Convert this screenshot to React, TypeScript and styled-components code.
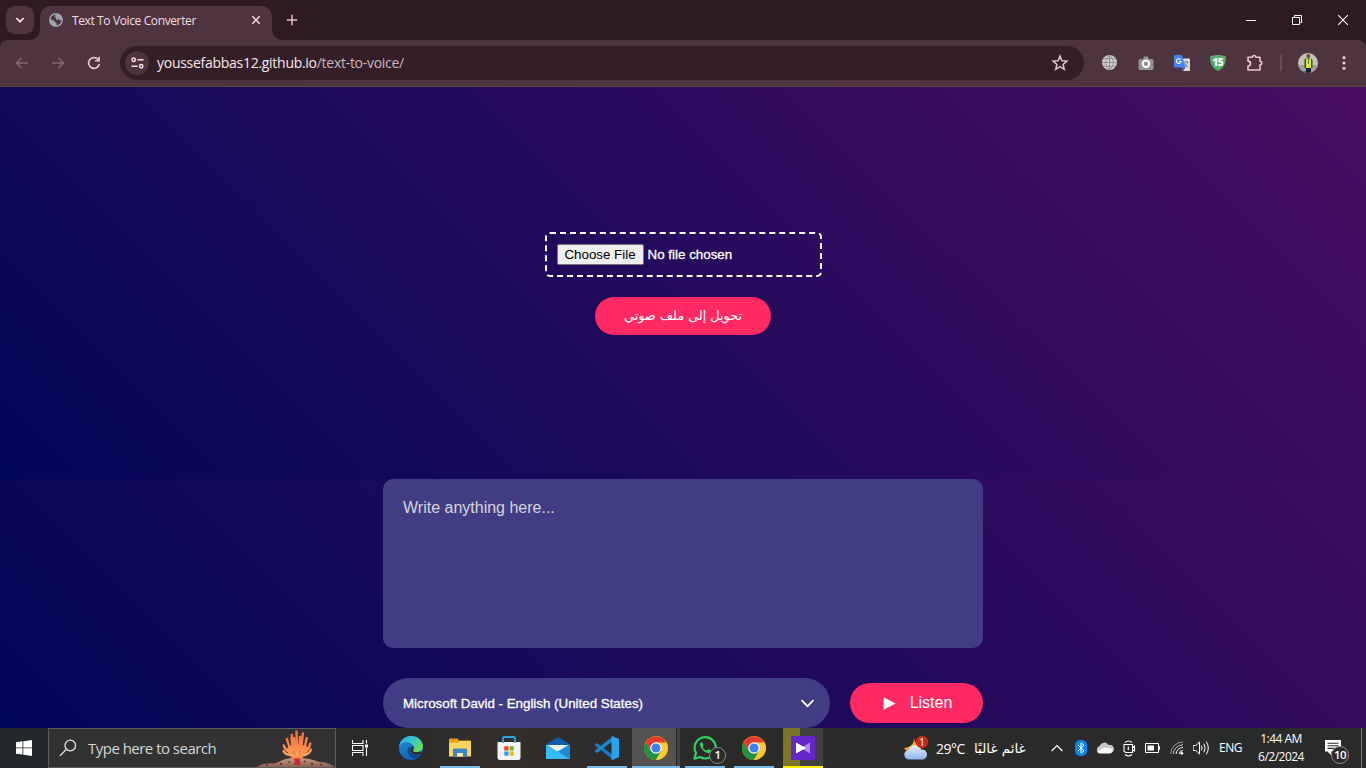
import React from 'react';
import styled, { createGlobalStyle, css } from 'styled-components';

const GlobalStyle = createGlobalStyle`
  * { box-sizing: border-box; }
  html, body { margin: 0; padding: 0; overflow: hidden; }
  svg { display: block; flex: none; }
`;

const uiFont = `'Open Sans', 'Noto Sans', 'DejaVu Sans', sans-serif`;
const pageFont = `'Liberation Sans', Arial, sans-serif`;

const Desktop = styled.div`
  width: 1366px;
  height: 768px;
  display: flex;
  flex-direction: column;
  overflow: hidden;
  background: #2e1a22;
  font-family: ${uiFont};
`;

/* ---------- Browser chrome ---------- */

const TabStrip = styled.div`
  height: 40px;
  display: flex;
  align-items: center;
  padding-left: 6px;
`;

const TabSearch = styled.div`
  width: 28px;
  height: 28px;
  border-radius: 9px;
  background: #4e343e;
  display: grid;
  place-items: center;
`;

const Tab = styled.div`
  position: relative;
  align-self: flex-end;
  width: 232px;
  height: 34px;
  margin-left: 6px;
  padding: 0 10px 6px 9px;
  display: flex;
  align-items: center;
  background: #4e343e;
  border-radius: 10px 10px 0 0;
  &::before, &::after {
    content: '';
    position: absolute;
    bottom: 0;
    width: 10px;
    height: 10px;
  }
  &::before { left: -10px; background: radial-gradient(circle at 0 0, transparent 9.5px, #4e343e 10px); }
  &::after { right: -10px; background: radial-gradient(circle at 100% 0, transparent 9.5px, #4e343e 10px); }
`;

const TabTitle = styled.span`
  flex: 1;
  margin-left: 9px;
  padding-top: 1px;
  font-size: 12px;
  letter-spacing: -0.38px;
  line-height: 17px;
  color: #f3dfe5;
  white-space: nowrap;
`;

const NewTab = styled.div`
  margin-left: 14px;
`;

const WindowControls = styled.div`
  margin-left: auto;
  display: flex;
`;

const WindowButton = styled.div`
  width: 46px;
  height: 40px;
  display: grid;
  place-items: center;
`;

const Toolbar = styled.div`
  height: 47px;
  display: flex;
  align-items: center;
  padding: 0 4px 1px;
  background: #4e343e;
  border-bottom: 1px solid #57444a;
  border-radius: 8px 8px 0 0;
`;

const ToolButton = styled.div`
  width: 36px;
  height: 36px;
  display: grid;
  place-items: center;
`;

const AddressBar = styled.div`
  width: 964px;
  height: 34px;
  margin: 0 8px;
  padding: 0 14px 0 5px;
  display: flex;
  align-items: center;
  border-radius: 17px;
  background: #341e28;
`;

const SiteInfo = styled.div`
  width: 24px;
  height: 24px;
  border-radius: 50%;
  background: #4e343e;
  display: grid;
  place-items: center;
`;

const Url = styled.span`
  flex: 1;
  margin-left: 8px;
  font-size: 14px;
  letter-spacing: -0.28px;
  line-height: 20px;
  color: #f8e9ee;
  span { color: #cbb6bd; }
`;

const ToolDivider = styled.div`
  width: 2px;
  height: 16px;
  margin: 0 8px;
  background: #6b4d58;
`;

/* ---------- Web page ---------- */

const Page = styled.main`
  height: 641px;
  display: flex;
  flex-direction: column;
  align-items: center;
  background: linear-gradient(45deg, #010758, #490d61);
  font-family: ${pageFont};
`;

const UploadSection = styled.section`
  width: 100%;
  height: 392px;
  padding-top: 145px;
  display: flex;
  flex-direction: column;
  align-items: center;
  background: linear-gradient(45deg, #010758, #490d61);
`;

const FileBox = styled.div`
  width: 277px;
  height: 45px;
  padding: 10px;
  display: flex;
  align-items: center;
  gap: 4px;
  border: 2px dashed #fff;
  border-radius: 5px;
`;

const FileButton = styled.button`
  width: 87px;
  height: 21px;
  padding: 0;
  border: 1px solid #767676;
  border-radius: 2px;
  background: #efefef;
  color: #000;
  font: 13.333px/17px ${pageFont};
`;

const FileStatus = styled.span`
  font-size: 13.333px;
  letter-spacing: 0.02px;
  color: #fff;
  -webkit-text-stroke: 0.3px #fff;
`;

const PinkButton = styled.button<{ $width: number; $height: number }>`
  width: ${p => p.$width}px;
  height: ${p => p.$height}px;
  padding: 0;
  display: flex;
  align-items: center;
  justify-content: center;
  border: 0;
  border-radius: 30px;
  background: #ff2963;
  color: #fff;
  font: 16px ${pageFont};
`;

const ConvertButton = styled(PinkButton)`
  margin-top: 20px;
  padding-bottom: 2px;
  font: 12.8px 'DejaVu Sans', sans-serif;
`;

const ListenButton = styled(PinkButton)`
  padding-left: 2px;
  gap: 14px;
`;

const TextBox = styled.div`
  width: 600px;
  height: 169px;
  padding: 20px;
  border-radius: 10px;
  background: #403d84;
  color: #d9d5dc;
  font-size: 16px;
  line-height: 18px;
`;

const Controls = styled.div`
  width: 600px;
  margin-top: 30px;
  display: flex;
  align-items: center;
  gap: 20px;
`;

const VoiceSelect = styled.div`
  flex: 1;
  height: 50px;
  padding: 0 15px 0 20px;
  display: flex;
  align-items: center;
  justify-content: space-between;
  border-radius: 25px;
  background: #403d84;
  color: #fff;
  font-size: 13.333px;
  -webkit-text-stroke: 0.3px #fff;
`;

/* ---------- Taskbar ---------- */

const Taskbar = styled.div`
  height: 40px;
  display: flex;
  background: linear-gradient(90deg, #22272b 0, #2a2a2a 28%, #312e2c 36%, #2b2a29 55%, #292b2b 100%);
  color: #fff;
`;

const StartButton = styled.div`
  width: 48px;
  display: grid;
  place-items: center;
`;

const SearchBox = styled.div`
  width: 288px;
  display: flex;
  align-items: center;
  padding-left: 10px;
  border: 1px solid #5d5d5d;
  background: #323232;
`;

const SearchText = styled.span`
  flex: 1;
  margin-left: 11px;
  font-size: 15px;
  letter-spacing: -0.52px;
  color: #d6d6d6;
  white-space: nowrap;
`;

const Apps = styled.div`
  display: flex;
  margin-left: 1px;
`;

const AppSlot = styled.div<{ $line?: string; $active?: boolean; $flag?: boolean }>`
  position: relative;
  width: 40px;
  height: 40px;
  margin: 0 4px 0 5px;
  padding-bottom: 1px;
  display: grid;
  place-items: center;
  ${p => p.$line && css`box-shadow: inset 0 -2px 0 ${p.$line};`}
  ${p => p.$active && css`
    width: 48px;
    margin: 0 0 0 1px;
    background: linear-gradient(90deg, #555352 44px, #242424 44px, #242424 45px, #454443 45px);
  `}
  ${p => p.$flag && css`
    background: linear-gradient(90deg, #7b7527 17px, #3f403f 17px);
  `}
`;

const TaskView = styled.div`
  width: 49px;
  display: grid;
  place-items: center;
`;

const CountBadge = styled.span<{ $left: number; $top: number; $size: number }>`
  position: absolute;
  left: ${p => p.$left}px;
  top: ${p => p.$top}px;
  width: ${p => p.$size}px;
  height: ${p => p.$size}px;
  border: 1px solid #8b8b8b;
  border-radius: 50%;
  background: #2b2b2b;
  font-size: 11.5px;
  font-weight: 600;
  letter-spacing: -0.5px;
  line-height: ${p => p.$size - 3}px;
  text-align: center;
`;

const Tray = styled.div`
  margin-left: auto;
  display: flex;
  font-size: 12px;
`;

const Weather = styled.div`
  width: 149px;
  padding-left: 7px;
  display: flex;
  align-items: center;
`;

const Temperature = styled.span`
  width: 38px;
  margin-left: 7px;
  font-size: 14px;
  letter-spacing: -0.5px;
`;

const Condition = styled.span`
  font: 13.5px 'DejaVu Sans', sans-serif;
  white-space: nowrap;
`;

const TrayIcon = styled.div`
  width: 24px;
  display: grid;
  place-items: center;
`;

const Language = styled.div`
  width: 36px;
  padding-right: 1px;
  line-height: 39px;
  text-align: center;
  letter-spacing: -0.45px;
`;

const Clock = styled.div`
  width: 64px;
  padding-top: 2px;
  text-align: center;
  line-height: 18px;
  letter-spacing: -0.5px;
`;

const Notifications = styled.div`
  position: relative;
  width: 48px;
  padding: 12px 0 0 12px;
`;

const ShowDesktop = styled.div`
  width: 5px;
  border-left: 1px solid #777;
`;

/* ---------- Drawings ---------- */

const ChromeLogo = () => (
  <svg width="24" height="24" viewBox="0 0 24 24">
    <circle cx="12" cy="12" r="12" fill="#fbc116" />
    <path d="M1.600 6A12 12 0 0 0 12 24L17.200 15 12 12 6.800 15Z" fill="#229342" />
    <path d="M12 24A12 12 0 0 0 22.400 6.500H12L17 15Z" fill="#fcc934" />
    <path d="M1.600 6 6.800 15 12 6.500H22.400A12 12 0 0 0 1.600 6Z" fill="#e33b2e" />
    <circle cx="12" cy="12" r="5.800" fill="#fff" />
    <circle cx="12" cy="12" r="4.600" fill="#3b82f0" />
  </svg>
);

const EdgeLogo = () => (
  <svg width="24" height="24" viewBox="0 0 24 24">
    <defs>
      <linearGradient id="edgeTop" x1="0" y1="0" x2="1" y2="0.5">
        <stop offset="0" stopColor="#2aa7e0" /><stop offset="0.55" stopColor="#38c6cf" /><stop offset="1" stopColor="#62dc5a" />
      </linearGradient>
      <linearGradient id="edgeBody" x1="0" y1="0" x2="0.6" y2="1">
        <stop offset="0" stopColor="#1d8fd8" /><stop offset="1" stopColor="#0f62b8" />
      </linearGradient>
    </defs>
    <circle cx="12" cy="12" r="12" fill="url(#edgeBody)" />
    <path d="M0 11C1 4 6 0 12 0c7 0 12 5 12 10.200c0 4-3 6-6.500 6c-3 0-4.200-1-3.500-2c1-1.200 1.200-2 .9-3.200C14 8 10.500 6.300 7.500 6.300 4 6.300 1 8.300 0 11Z" fill="url(#edgeTop)" />
    <path d="M9 12.200c-1.800 5 2 10 7 10 2.400 0 5.100-1.600 6.500-3.700-3.500 1.800-9 1.400-11.500-2.300-1-1.600-.8-3.500.3-5.200-1 0-1.800.5-2.300 1.200Z" fill="#0a4687" />
    <path d="M22.600 18.200c1 .4-1 2.500-2 3.200l4 3V16Z" fill="#2e2c2b" />
    <path d="M14.600 10.800c.6 1.700-.2 2.500-.8 3.500-.6 1.100 1 1.900 3.700 1.900 1.300 0 2.600-.3 3.700-1L23 17c-3.200 2.500-8.500 2.200-10.800-.2-1.700-1.900-.9-5 .9-6.600Z" fill="#2e2c2b" />
  </svg>
);

const FolderIcon = () => (
  <svg width="22" height="20" viewBox="0 0 22 20">
    <path d="M0 1.500A1 1 0 0 1 1 .5h7.500L10 2.500h11a1 1 0 0 1 1 1V8H0Z" fill="#e5a00d" />
    <path d="M0 4.500h9l1.500-1.500H22v15.500H0Z" fill="#fcd462" />
    <path d="M4 11.500a1 1 0 0 1 1-1h12a1 1 0 0 1 1 1v7h-4v-3.500H8v3.500H4Z" fill="#3a87c8" />
    <path d="M8 15h6v3.500H8Z" fill="#fbe9b0" />
  </svg>
);

const StoreIcon = () => (
  <svg width="24" height="24" viewBox="0 0 24 24">
    <path d="M6 7V2a1 1 0 0 1 1-1h10a1 1 0 0 1 1 1v5" fill="none" stroke="#2fa3df" strokeWidth="1.800" />
    <path d="M.5 6h23v15.500a2.500 2.500 0 0 1-2.500 2.500H3a2.500 2.500 0 0 1-2.500-2.500Z" fill="#f5f5f5" />
    <path d="M6 6V4.500M18 6V4.500M6 6v1M18 6v1" stroke="#2fa3df" strokeWidth="1.800" />
    <path d="M7.300 10.300h4.200v4.200H7.300Z" fill="#e8402a" /><path d="M12.500 10.300h4.200v4.200h-4.200Z" fill="#75b51b" />
    <path d="M7.300 15.500h4.200v4.200H7.300Z" fill="#2aa0e6" /><path d="M12.500 15.500h4.200v4.200h-4.200Z" fill="#fcb514" />
  </svg>
);

const MailIcon = () => (
  <svg width="24" height="24" viewBox="0 0 24 24">
    <path d="M0 8.500 12 1l12 7.500V13H0Z" fill="#0f5fae" />
    <path d="M1.500 9h21L12 17Z" fill="#f1f3f6" />
    <path d="M12 15 24 8.500V23H0Z" fill="#2ba6ea" />
    <path d="M0 8.500 24 23H0Z" fill="#37bcf5" />
    <path d="M24 8.500 12.500 15.800 24 23Z" fill="#1e8ad6" />
  </svg>
);

const CodeIcon = () => (
  <svg width="24" height="24" viewBox="0 0 24 24">
    <path d="M0 8.500 2 7l16 12v4.800L0 9.500Z" fill="#1678bd" />
    <path d="M0 15.500 2 17 18 5V.2L0 14.500Z" fill="#1a86cc" />
    <path d="M17.500.2 24 3v18l-6.500 3c-.6 0-1-.3-1-.8V.8c0-.4.4-.6 1-.6Z" fill="#2ba2ee" />
  </svg>
);

const WhatsAppIcon = () => (
  <svg width="24" height="24" viewBox="0 0 24 24" fill="none">
    <path d="M1.300 22.700 3 17A10.600 10.600 0 1 1 7 21Z" stroke="#2fd366" strokeWidth="2.100" strokeLinejoin="round" />
    <path d="M8.200 6.200c-1.800 1.300-1.600 3.300.3 6 2.300 3.300 4.700 4.800 6.900 4.900 1.500 0 2.600-.8 2.800-2.500l-3-1.500-1.400 1.600c-2-.8-3.400-2.100-4.300-3.800l1-1.500-1.300-3.200Z" fill="#2fd366" />
  </svg>
);

const PurpleStudioIcon = () => (
  <svg width="24" height="24" viewBox="0 0 24 24">
    <rect width="24" height="24" rx="1.500" fill="#6425cb" />
    <path d="M19 6.500v11L10 12Z" fill="#b08aea" />
    <path d="M5 6.500v11l10-5.500Z" fill="#fff" />
  </svg>
);

const CoralArt = () => (
  <svg width="80" height="38" viewBox="0 0 80 38">
    <defs>
      <linearGradient id="coral" gradientUnits="userSpaceOnUse" x1="0" y1="2" x2="0" y2="32">
        <stop offset="0" stopColor="#f4703c" /><stop offset="0.5" stopColor="#fd8848" /><stop offset="0.8" stopColor="#ffa45c" /><stop offset="1" stopColor="#f4683c" />
      </linearGradient>
      <linearGradient id="sand" x1="0" y1="0" x2="0" y2="1">
        <stop offset="0" stopColor="#c79b82" /><stop offset="1" stopColor="#8b5f50" />
      </linearGradient>
    </defs>
    <path d="M2 38c4-3 9-4 15-3.500 5 .3 8-3 14-4.500 7-1.800 16-1.300 23 0 7 1.500 8 3 13 3.200 5 .3 9 2 13 4.800Z" fill="url(#sand)" />
    <path d="M32 19 38 15h8l7 3c-1 6-4 10-8 13h-6c-4-3-6-7-7-12Z" fill="url(#coral)" />
    <g fill="none" stroke="#d94a30" strokeWidth=".7" opacity=".8">
      <path d="M38 16c.5 4 1 7 2.500 10M46 15c0 4-.5 8-2 11M34.500 19c1 3 2.500 5 4.500 7M50.500 19c-1 3-3 6-5 7.500" />
    </g>
    <g fill="none" stroke="url(#coral)" strokeLinecap="round" strokeLinejoin="round" strokeWidth="2.400">
      <path d="M42 20 41.500 2.500M39 20C37 16 36.500 10 36.800 6M36 21C33.500 17 33 13 31.800 10M34 23C30.500 21 29.500 19 28.800 16.500M45.500 20C47.500 14 47 8 48 4.500M48.500 21C51 17 50.500 12 51.800 9M50 23C53 21 54.500 18 55.200 14.500M34.500 26C31 25.500 29.500 24 28.500 22M49.500 26C53 25 55 23 56 20.500M44.600 16 45 8M39.500 14 39 9" />
    </g>
    <path d="M39 29.500c1 3 .5 5-.5 6.500h7.500c-1.500-2-1.500-4-.8-6.500Z" fill="#c62a34" />
    <g fill="#563a35">
      <circle cx="12" cy="36" r="1" /><circle cx="26" cy="35" r="1.200" /><circle cx="34" cy="33" r=".9" /><circle cx="50" cy="32.500" r="1" /><circle cx="57" cy="35" r="1.200" /><circle cx="66" cy="35.500" r="1" />
    </g>
  </svg>
);

const WeatherIcon = () => (
  <svg width="26" height="26" viewBox="0 0 26 26">
    <defs>
      <linearGradient id="cloud" x1="0" y1="0" x2="0" y2="1">
        <stop offset="0" stopColor="#e6effd" /><stop offset="1" stopColor="#8db2ec" />
      </linearGradient>
    </defs>
    <path d="M10.500 1c1.800 6-1.500 11.500-9.500 12 3 5.500 14 6 18-1C14 12 11.500 7 10.500 1Z" fill="#f6a62c" />
    <path d="M6.500 24.500a4.800 4.800 0 0 1-.8-9.600A6.500 6.500 0 0 1 18 14.600a5 5 0 0 1 2 9.900Z" fill="url(#cloud)" />
    <circle cx="19" cy="7" r="6.200" fill="#c42b1c" />
    <text x="19" y="10.800" fontSize="10.500" fill="#fff" textAnchor="middle" fontFamily="Open Sans, sans-serif">1</text>
  </svg>
);

const AvatarIcon = () => (
  <svg width="20" height="20" viewBox="0 0 20 20">
    <defs><clipPath id="round"><circle cx="10" cy="10" r="10" /></clipPath></defs>
    <g clipPath="url(#round)">
      <rect width="20" height="20" fill="#c9c0b4" />
      <path d="M0 12h20v8H0Z" fill="#a99f96" />
      <path d="M4 18h5v2H4Z" fill="#2673c4" />
      <circle cx="10.300" cy="3" r="2" fill="#694f43" />
      <path d="M6.500 6.500 8.500 5h4L14.500 7v8h-8Z" fill="#1f4b78" />
      <path d="M8 5.500h5V15H8Z" fill="#d5ea2b" />
      <path d="M10 5h.8v6H10Z" fill="#51603c" />
      <path d="M8 15h5v5H8Z" fill="#17202f" />
    </g>
  </svg>
);

const stroke = { fill: 'none', strokeLinecap: 'round', strokeLinejoin: 'round' } as const;

export default function App() {
  return (
    <Desktop>
      <GlobalStyle />

      <TabStrip>
        <TabSearch>
          <svg width="10" height="6" viewBox="0 0 10 6"><path d="m1.300 1 3.700 3.700L8.700 1" fill="none" stroke="#f6dfe6" strokeWidth="1.700" /></svg>
        </TabSearch>
        <Tab>
          <svg width="14" height="14" viewBox="0 0 14 14">
            <circle cx="7" cy="7" r="7" fill="#9ba5aa" />
            <path d="M7.600 1.400C6 2 5 3.500 6.500 4.200c1 .4-.4 1.800.8 2.300 1.500.5 2.500-.5 3.200.3.500.8 1.200.6 1.900.2 0 2.900-2.200 5.200-5 5.400.6-1.200.5-2.500-.6-3C5.700 8.900 5.500 7.300 4 7.200c-1 0-1.800-.5-2.400-1.100C2 3.200 4.600 1.200 7.600 1.400Z" fill="#4e343e" />
            <path d="M8.200 2.200c1.300.2 2.300.8 3 1.700-.8.700-2 .4-2.600-.2-.4-.5-.7-1-.4-1.500Z" fill="#9ba5aa" />
          </svg>
          <TabTitle>Text To Voice Converter</TabTitle>
          <svg width="12" height="12" viewBox="0 0 12 12"><path d="m2.300 2.300 7.400 7.400m0-7.400L2.300 9.700" stroke="#f6dfe6" strokeWidth="1.500" /></svg>
        </Tab>
        <NewTab>
          <svg width="12" height="12" viewBox="0 0 12 12"><path d="M6 .8v10.400M.8 6h10.400" stroke="#e6b9c9" strokeWidth="1.500" /></svg>
        </NewTab>
        <WindowControls>
          <WindowButton><svg width="10" height="10" viewBox="0 0 10 10"><path d="M0 5.500h10" stroke="#fff" /></svg></WindowButton>
          <WindowButton><svg width="10" height="10" viewBox="0 0 10 10"><path d="M.5 2.500h7v7h-7ZM2.500 2.500v-2h7v7h-2" fill="none" stroke="#fff" /></svg></WindowButton>
          <WindowButton><svg width="10" height="10" viewBox="0 0 10 10"><path d="m0 0 10 10M10 0 0 10" stroke="#fff" strokeWidth="1.100" /></svg></WindowButton>
        </WindowControls>
      </TabStrip>

      <Toolbar>
        <ToolButton><svg width="14" height="12" viewBox="0 0 14 12"><path d="M13 6H2M6.500 1 1.500 6l5 5" fill="none" stroke="#866873" strokeWidth="1.600" /></svg></ToolButton>
        <ToolButton><svg width="14" height="12" viewBox="0 0 14 12"><path d="M1 6h11M7.500 1l5 5-5 5" fill="none" stroke="#866873" strokeWidth="1.600" /></svg></ToolButton>
        <ToolButton><svg width="14" height="14" viewBox="0 0 14 14"><path d="M12.300 8A5.400 5.400 0 1 1 11 3.300L12.300 4.700" fill="none" stroke="#eec3d0" strokeWidth="1.700" /><path d="M12.900.8v4.800H8.100V4h3.200V.8Z" fill="#eec3d0" /></svg></ToolButton>
        <AddressBar>
          <SiteInfo>
            <svg width="13" height="12" viewBox="0 0 13 12" fill="none" stroke="#f6dfe6" strokeWidth="1.500">
              <circle cx="2.700" cy="2.700" r="1.700" /><path d="M6.500 2.700h6M.5 9.200h6" /><circle cx="10.200" cy="9.200" r="1.700" />
            </svg>
          </SiteInfo>
          <Url>youssefabbas12.github.io<span>/text-to-voice/</span></Url>
          <svg width="20" height="20" viewBox="0 0 20 20"><path d="m10 3 1.900 4.700 5 .4-3.800 3.300 1.200 4.900L10 13.700l-4.300 2.600 1.200-4.900-3.800-3.300 5-.4Z" fill="none" stroke="#ddc3cb" strokeWidth="1.500" /></svg>
        </AddressBar>
        <ToolButton>
          <svg width="16" height="16" viewBox="0 0 16 16"><circle cx="7.500" cy="7.500" r="7.500" fill="#d0cfcf" /><path d="M7.500 0v15M0 7.500h15M1.200 3.700h12.600M1.200 11.300h12.600M7.500.3c-5 4-5 10.400 0 14.400 5-4 5-10.400 0-14.400Z" fill="none" stroke="#858082" strokeWidth=".8" /></svg>
        </ToolButton>
        <ToolButton>
          <svg width="16" height="14" viewBox="0 0 16 14"><path d="M2 3h3l1-2.500h4L11 3h3a1.500 1.500 0 0 1 1.500 1.500v8A1.500 1.500 0 0 1 14 14H2a1.500 1.500 0 0 1-1.500-1.500v-8A1.500 1.500 0 0 1 2 3Z" fill="#929292" /><circle cx="8" cy="7.800" r="3.300" fill="none" stroke="#fff" strokeWidth="2" /></svg>
        </ToolButton>
        <ToolButton>
          <svg width="16" height="16" viewBox="0 0 16 16">
            <path d="M6 3.500h9a1 1 0 0 1 1 1V15a1 1 0 0 1-1 1H9Z" fill="#dcdfe1" />
            <path d="M9.500 7h5M12 5.800V7m1.800 0c-.5 2.500-2 4-3.300 5m0-4c.7 2 2 3.500 3.800 4.300" fill="none" stroke="#607d86" strokeWidth=".9" />
            <path d="M1 0h7l3.500 12.500H1a1 1 0 0 1-1-1V1a1 1 0 0 1 1-1Z" fill="#4284f3" /><path d="M8 12.500h3.500L9 16Z" fill="#2456b5" />
            <path d="M6.600 4.700A2.300 2.300 0 1 0 7 6.500H4.900" fill="none" stroke="#fff" strokeWidth="1.100" />
          </svg>
        </ToolButton>
        <ToolButton>
          <svg width="16" height="16" viewBox="0 0 16 16"><path d="M8 0c2.500 0 5.500.5 8 1.500C16 9 13.500 13.500 8 16 2.500 13.500 0 9 0 1.500 2.500.5 5.500 0 8 0Z" fill="#5aaa68" /><text x="7.800" y="10.500" fontSize="10" fontWeight="800" fill="#fff" textAnchor="middle" letterSpacing="-0.5" fontFamily="Open Sans, sans-serif">15</text></svg>
        </ToolButton>
        <ToolButton>
          <svg width="18" height="18" viewBox="0 0 18 18"><path d="M3 3.200H7.500a1.700 1.700 0 0 1 3.400 0H15v4.100a1.700 1.700 0 0 1 0 3.400V16H3v-3.900a2.500 2.500 0 0 0 0-5Z" {...stroke} stroke="#eec3d0" strokeWidth="1.600" /></svg>
        </ToolButton>
        <ToolDivider />
        <ToolButton><AvatarIcon /></ToolButton>
        <ToolButton><svg width="4" height="14" viewBox="0 0 4 14" fill="#eec3d0"><circle cx="2" cy="1.700" r="1.600" /><circle cx="2" cy="7" r="1.600" /><circle cx="2" cy="12.300" r="1.600" /></svg></ToolButton>
      </Toolbar>

      <Page>
        <UploadSection>
          <FileBox>
            <FileButton>Choose File</FileButton>
            <FileStatus>No file chosen</FileStatus>
          </FileBox>
          <ConvertButton $width={176} $height={38} dir="rtl">تحويل إلى ملف صوتي</ConvertButton>
        </UploadSection>
        <TextBox>Write anything here...</TextBox>
        <Controls>
          <VoiceSelect>
            Microsoft David - English (United States)
            <svg width="15" height="9" viewBox="0 0 15 9"><path d="m1.500 1.200 6 6 6-6" fill="none" stroke="#fff" strokeWidth="1.700" /></svg>
          </VoiceSelect>
          <ListenButton $width={133} $height={40}>
            <svg width="13" height="13" viewBox="0 0 13 13"><path d="M.6.300 12.600 6.500.6 12.700Z" fill="#fff" /></svg>
            Listen
          </ListenButton>
        </Controls>
      </Page>

      <Taskbar>
        <StartButton>
          <svg width="16" height="16" viewBox="0 0 16 16" fill="#fff"><path d="M0 2.200 6.500 1.300v6.200H0ZM7.300 1.200 16 0v7.500H7.300ZM0 8.300h6.500v6.300L0 13.700ZM7.300 8.300H16V16l-8.700-1.300Z" /></svg>
        </StartButton>
        <SearchBox>
          <svg width="18" height="18" viewBox="0 0 18 18"><circle cx="11.300" cy="6.500" r="5.300" fill="none" stroke="#e4e4e4" strokeWidth="1.300" /><path d="m7.500 10.300-6.500 6.500" stroke="#e4e4e4" strokeWidth="1.300" /></svg>
          <SearchText>Type here to search</SearchText>
          <CoralArt />
        </SearchBox>
        <TaskView>
          <svg width="17" height="16" viewBox="0 0 17 16"><path d="M.5 0v3.500h10.500V0M.5 16v-3.500h10.500V16M.5 5.500h10.500v5H.5ZM14.500 0v3.500M14.500 8v8" fill="none" stroke="#fff" strokeWidth="1.100" /><path d="M13 4.500h3v3h-3Z" fill="#fff" /></svg>
        </TaskView>
        <Apps>
          <AppSlot><EdgeLogo /></AppSlot>
          <AppSlot $line="#76b9ed"><FolderIcon /></AppSlot>
          <AppSlot><StoreIcon /></AppSlot>
          <AppSlot><MailIcon /></AppSlot>
          <AppSlot $line="#76b9ed"><CodeIcon /></AppSlot>
          <AppSlot $line="#76b9ed" $active><ChromeLogo /></AppSlot>
          <AppSlot $line="#76b9ed"><WhatsAppIcon /><CountBadge $left={24} $top={19} $size={17}>1</CountBadge></AppSlot>
          <AppSlot $line="#76b9ed"><ChromeLogo /></AppSlot>
          <AppSlot $line="#fff100" $flag><PurpleStudioIcon /></AppSlot>
        </Apps>
        <Tray>
          <Weather>
            <WeatherIcon />
            <Temperature>29°C</Temperature>
            <Condition dir="rtl">غائم غالبًا</Condition>
          </Weather>
          <TrayIcon><svg width="12" height="8" viewBox="0 0 12 8"><path d="m.6 7 5.400-5.500L11.400 7" fill="none" stroke="#fff" strokeWidth="1.200" /></svg></TrayIcon>
          <TrayIcon><svg width="12" height="16" viewBox="0 0 12 16"><rect width="12" height="16" rx="5" fill="#0a84f0" /><path d="m3 5 6 5.700-3 2.500V2.800l3 2.500L3 11" fill="none" stroke="#fff" strokeWidth="1" /></svg></TrayIcon>
          <TrayIcon><svg width="18" height="12" viewBox="0 0 18 12"><path d="M4 11A3.600 3.600 0 0 1 3.500 4 5 5 0 0 1 12.500 3 4 4 0 0 1 15 11Z" fill="#c6c6c6" /><path d="M1 9.500 8 5.500l8 1a3.200 3.200 0 0 1-2 5H4a3.500 3.500 0 0 1-3-2Z" fill="#f6f6f6" /></svg></TrayIcon>
          <TrayIcon><svg width="13" height="17" viewBox="0 0 13 17"><path d="M2 2.500Q5.500-.5 9 2.500M2 14.500Q5.500 17.500 9 14.500M1 4.500h8.500v8H2.500L1 11ZM9.500 7.500l2-1.500v5l-2-1.500" fill="none" stroke="#fff" strokeWidth="1.100" /><path d="M5.300 6.500v3.500" stroke="#fff" strokeWidth="1.200" /></svg></TrayIcon>
          <TrayIcon><svg width="16" height="10" viewBox="0 0 16 10"><path d="M.5.500h13v9H.5ZM13.500 3.500h1v3h-1" fill="none" stroke="#fff" /><path d="M2.500 2.500h6.500v5H2.500Z" fill="#fff" /></svg></TrayIcon>
          <TrayIcon><svg width="14" height="14" viewBox="0 0 14 14"><g fill="none" stroke="#fff" strokeWidth="1"><path d="M9 13A4 4 0 0 1 13 9.500" /><path d="M6 13A7 7 0 0 1 13 6.500" /><path d="M3.300 13A9.700 9.700 0 0 1 13 3.800" opacity=".75" /><path d="M.6 13A12.300 12.300 0 0 1 13 1" opacity=".55" /></g><circle cx="11.800" cy="12.300" r="1.400" fill="#fff" /></svg></TrayIcon>
          <TrayIcon><svg width="17" height="14" viewBox="0 0 17 14"><path d="M.5 4.500h2.300L6.500 1v12L2.800 9.500H.5Z" {...stroke} stroke="#fff" /><path d="M8.500 5q1.300 2 0 4M11 3q2.500 4 0 8M13.500 1q3.800 6 0 12" {...stroke} stroke="#fff" /></svg></TrayIcon>
          <Language>ENG</Language>
          <Clock>1:44 AM<br />6/2/2024</Clock>
          <Notifications>
            <svg width="16" height="15" viewBox="0 0 16 15"><path d="M0 0h16v11.500H6V15l-3.500-3.500H0Z" fill="#fff" /><path d="M2.500 3.200h11M2.500 5.800h11M2.500 8.400h7" stroke="#2a2b2b" strokeWidth="1.100" /></svg>
            <CountBadge $left={18} $top={18} $size={18}>10</CountBadge>
          </Notifications>
          <ShowDesktop />
        </Tray>
      </Taskbar>
    </Desktop>
  );
}
